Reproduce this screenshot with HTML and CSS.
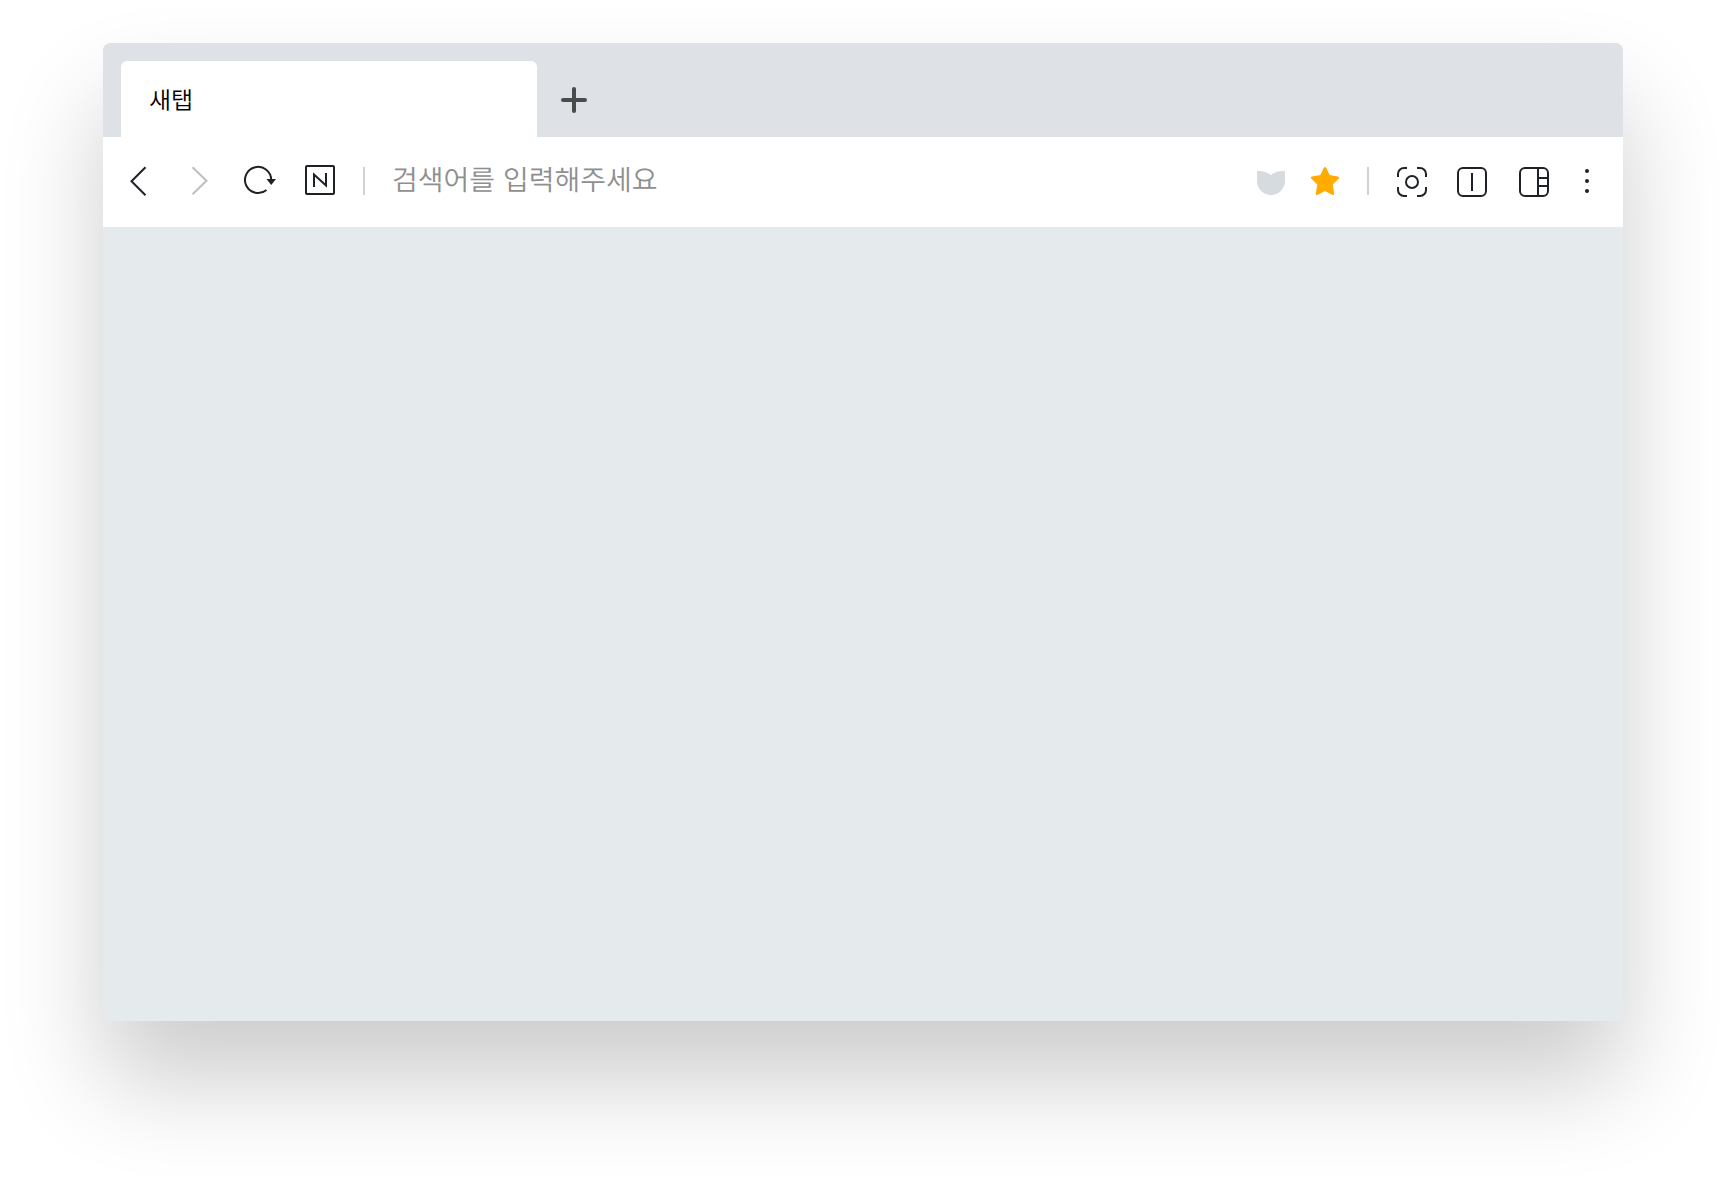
FILE: index.html
```html
<!DOCTYPE html>
<html lang="ko">
<head>
<meta charset="utf-8">
<meta name="viewport" content="width=device-width, initial-scale=1">
<title>새탭</title>
<link rel="stylesheet" href="styles.css">
</head>
<body>
<div class="window">
  <header class="tab-bar">
    <button class="tab" type="button">새탭</button>
    <button class="new-tab" type="button" aria-label="새 탭 열기">
      <svg width="26" height="26" viewBox="0 0 26 26"><path d="M13 2v22M2 13h22" stroke="#4a4b4d" stroke-width="4" stroke-linecap="round"/></svg>
    </button>
  </header>
  <div class="toolbar">
    <nav class="group">
      <button class="icon" type="button" aria-label="뒤로"><svg width="32" height="34" viewBox="0 0 32 34"><path d="M21.500 2.200 7.500 16.200l14 14"/></svg></button>
      <button class="icon icon-muted" type="button" aria-label="앞으로" disabled><svg width="32" height="34" viewBox="0 0 32 34"><path d="M8.500 2.200 22.500 15.700 8.500 29.300"/></svg></button>
      <button class="icon" type="button" aria-label="새로고침"><svg width="32" height="34" viewBox="0 0 32 34"><path d="M22.500 25A13.100 13.100 0 1 1 27.200 15"/><path class="solid" d="M22.500 14H32L27.200 20z"/></svg></button>
      <button class="icon" type="button" aria-label="홈"><svg width="32" height="34" viewBox="0 0 32 34"><rect x="2" y="1" width="28" height="28" rx="1"/><path d="M10 22V9.500L22 20.500V8"/></svg></button>
    </nav>
    <span class="divider"></span>
    <input class="address" type="text" aria-label="검색어" placeholder="검색어를 입력해주세요">
    <div class="group bookmarks">
      <button class="icon" type="button" aria-label="웨일"><svg width="32" height="34" viewBox="-1 0 32 34"><path class="whale" d="M2 6.800C2 6.300 2.300 6 3 6c5 0 9.500 .800 13 4.300C19.500 6.800 24 6 29 6c.700 0 1 .300 1 .800V16a14 14 0 0 1-28 0z"/></svg></button>
      <button class="icon" type="button" aria-label="북마크"><svg width="32" height="34" viewBox="-1 0 32 34"><path class="star" d="M14.700 2.900Q16 1 17.300 2.900L20.600 10.100 29 11.400Q31 12.100 29.600 13.700L23.700 19.600 25.200 28.500Q25 30.600 23.100 29.800L16 26 8.900 29.800Q7 30.600 6.800 28.500L8.300 19.600 2.400 13.700Q1 12.100 3 11.400L11.400 10.100z"/></svg></button>
    </div>
    <span class="divider"></span>
    <div class="group">
      <button class="icon" type="button" aria-label="캡처"><svg width="32" height="34" viewBox="0 0 32 34"><path d="M2 12V9a6 6 0 0 1 6-6h3M21 3h3a6 6 0 0 1 6 6v3M30 22v3a6 6 0 0 1-6 6h-3M11 31H8a6 6 0 0 1-6-6v-3"/><circle cx="16" cy="17" r="6"/></svg></button>
      <button class="icon" type="button" aria-label="화면 분할"><svg width="32" height="34" viewBox="0 0 32 34"><rect x="2" y="3" width="28" height="28" rx="5"/><path d="M16 8v18"/></svg></button>
      <button class="icon" type="button" aria-label="사이드바"><svg width="34" height="34" viewBox="0 0 34 34"><rect x="4" y="3" width="28" height="28" rx="5"/><path d="M22 3v28M22 13h10M22 21h10"/></svg></button>
      <button class="icon" type="button" aria-label="메뉴"><svg width="18" height="34" viewBox="0 0 18 34"><g class="solid"><circle cx="9" cy="6" r="2"/><circle cx="9" cy="16" r="2"/><circle cx="9" cy="26" r="2"/></g></svg></button>
    </div>
  </div>
  <main class="page"></main>
</div>
</body>
</html>
```
FILE: styles.css
```css
* {
  box-sizing: border-box;
}

body {
  display: flex;
  min-height: 100vh;
  margin: 0;
  padding: 43px 103px 163px;
  background: #fff;
  font-family: "Noto Sans CJK KR", sans-serif;
  text-rendering: geometricPrecision;
  overflow-x: hidden;
}

button,
input {
  margin: 0;
  padding: 0;
  border: 0;
  background: none;
  font: inherit;
  text-rendering: inherit;
}

svg {
  display: block;
  fill: none;
}

.window {
  display: flex;
  flex: 1;
  flex-direction: column;
  min-width: 0;
  border-radius: 8px;
  background: #e5eaed;
  box-shadow: 0 60px 100px rgba(0, 0, 0, 0.2);
}

.tab-bar {
  display: flex;
  gap: 24px;
  padding: 18px 18px 0;
  border-radius: 8px 8px 0 0;
  background: #dee2e7;
}

.tab {
  width: 416px;
  height: 76px;
  padding: 0 28px 2px;
  border-radius: 6px 6px 0 0;
  background: #fff;
  color: #000;
  font-size: 24px;
  font-weight: 350;
  text-align: left;
}

.new-tab {
  padding-top: 2px;
}

.toolbar {
  display: flex;
  align-items: center;
  height: 90px;
  padding: 0 27px 0 21px;
  background: #fff;
}

.group {
  display: flex;
  gap: 28px;
}

.bookmarks {
  gap: 22px;
}

.icon svg {
  stroke: #1e2227;
  stroke-width: 2;
}

.icon-muted svg {
  stroke: #bfbfbf;
}

.icon .solid {
  fill: #1e2227;
  stroke: none;
}

.icon .whale {
  fill: #d6dbdf;
  stroke: none;
}

.icon .star {
  fill: #ffab00;
  stroke: none;
}

.divider {
  width: 2px;
  height: 28px;
  margin: 0 27px 2px;
  background: #cdd2d3;
}

.address {
  flex: 1;
  min-width: 0;
  height: 54px;
  padding-bottom: 6px;
  font-size: 28px;
  font-weight: 350;
  outline: none;
}

.address::placeholder {
  color: #8f8f8f;
  opacity: 1;
}

.page {
  flex: 1;
}
```
